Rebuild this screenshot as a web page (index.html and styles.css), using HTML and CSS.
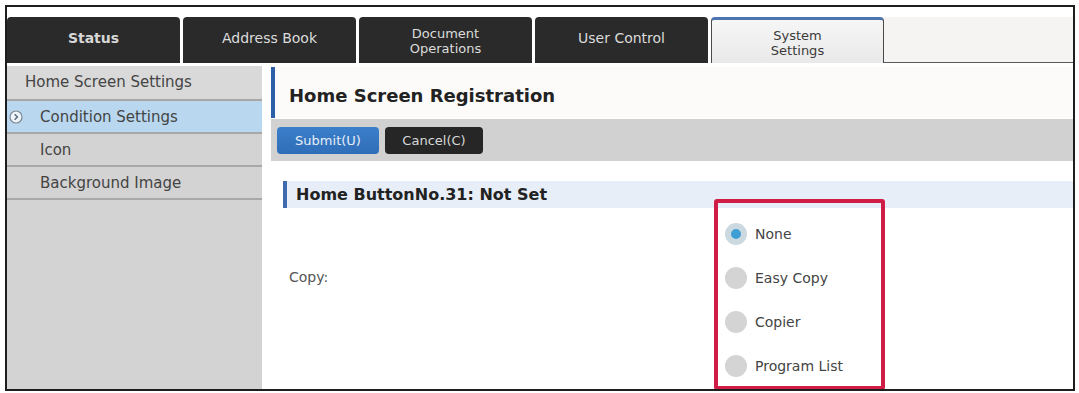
FILE: index.html
```html
<!DOCTYPE html>
<html>
<head>
  <title>Home Screen Registration</title>
  <link rel="stylesheet" href="styles.css">
</head>
<body>
  <div class="frame">
    <div class="tabs">
      <div class="tab tab-strong">Status</div>
      <div class="tab">Address Book</div>
      <div class="tab tab-two">Document<br>Operations</div>
      <div class="tab">User Control</div>
      <div class="tab tab-two tab-active">System<br>Settings</div>
      <div class="tab-fill"></div>
    </div>

    <div class="layout">
      <nav class="side">
        <div class="side-head">Home Screen Settings</div>
        <div class="side-item side-current">
          <svg class="side-arrow" width="14" height="14" viewBox="0 0 14 14">
            <circle cx="7" cy="7" r="6" fill="#eef5fb" stroke="#7d8a96" stroke-width="1.2" />
            <path d="M5.6 4.3 L8.4 7 L5.6 9.7" fill="none" stroke="#5c6b78" stroke-width="1.5" />
          </svg>
          Condition Settings
        </div>
        <div class="side-item">Icon</div>
        <div class="side-item">Background Image</div>
      </nav>

      <main class="main">
        <div class="page-head">Home Screen Registration</div>
        <div class="toolbar">
          <button class="btn btn-submit">Submit(U)</button>
          <button class="btn btn-cancel">Cancel(C)</button>
        </div>

        <div class="section-head">Home ButtonNo.31: Not Set</div>

        <div class="field">
          <div class="field-label">Copy:</div>
          <div class="options">
            <label class="option"><span class="radio radio-on"></span>None</label>
            <label class="option"><span class="radio"></span>Easy Copy</label>
            <label class="option"><span class="radio"></span>Copier</label>
            <label class="option"><span class="radio"></span>Program List</label>
          </div>
        </div>

        <div class="highlight"></div>
      </main>
    </div>
  </div>
</body>
</html>
```

FILE: styles.css
```css
body {
  margin: 0;
  background-color: white;
  font-family: "DejaVu Sans", Verdana, sans-serif;
}

.frame {
  margin: 5px;
  width: 1066px;
  height: 382px;
  border: 2px solid #1e1e1e;
  overflow: hidden;
}

/* top tabs */
.tabs {
  display: flex;
  gap: 3px;
  padding-top: 10px;
  height: 46px;
  margin-bottom: 3px;
}

.tab {
  width: 173px;
  height: 46px;
  box-sizing: border-box;
  display: flex;
  align-items: center;
  justify-content: center;
  text-align: center;
  background-color: #2a2a2a;
  color: #dcdcdc;
  font-size: 14px;
  border-radius: 4px 4px 0 0;
  padding-bottom: 4px;
}

.tab-strong {
  font-weight: bold;
  color: #d6d6d6;
}

.tab-two {
  font-size: 13px;
  line-height: 15px;
  padding-bottom: 0;
  padding-top: 2px;
}

.tab-active {
  background: linear-gradient(#f6f6f6, #e9e9e9);
  color: #3a3a3a;
  border-top: 3px solid #4b74b0;
  border-left: 1px solid #4a4a4a;
  border-right: 1px solid #4a4a4a;
}

.tab-fill {
  flex: 1;
  height: 46px;
  box-sizing: border-box;
  background-color: #f5f4f2;
  border-bottom: 1px solid #5a5a5a;
  margin-left: -3px;
}

/* page body */
.layout {
  display: flex;
  height: 323px;
}

.side {
  width: 255px;
  background-color: #d3d3d3;
  color: #444;
  font-size: 15px;
}

.side-head {
  height: 33px;
  line-height: 33px;
  padding-left: 18px;
  background-color: #d9d9d9;
  border-bottom: 2px solid #a8a8a8;
}

.side-item {
  height: 31px;
  display: flex;
  align-items: center;
  padding-left: 33px;
  border-bottom: 2px solid #a8a8a8;
}

.side-current {
  background-color: #b9d8ef;
  padding-left: 2px;
}

.side-arrow {
  margin-right: 17px;
}

.main {
  flex: 1;
  position: relative;
  background-color: white;
  color: #222;
}

.page-head {
  margin: 1px 0 0 9px;
  height: 51px;
  box-sizing: border-box;
  padding: 6px 0 0 14px;
  display: flex;
  align-items: center;
  background-color: #fcfbf9;
  border-left: 4px solid #2c5fa8;
  font-size: 18px;
  font-weight: bold;
}

.toolbar {
  margin: 1px 0 0 9px;
  height: 42px;
  display: flex;
  align-items: center;
  gap: 6px;
  padding-left: 6px;
  background-color: #d1d1d1;
}

.btn {
  height: 27px;
  border: none;
  border-radius: 4px;
  font-family: "DejaVu Sans", Verdana, sans-serif;
  font-size: 13px;
  padding: 0;
}

.btn-submit {
  width: 102px;
  background: linear-gradient(#3b7fca, #2f6db7);
  color: #e6eef8;
}

.btn-cancel {
  width: 98px;
  background-color: #262626;
  color: #d8d8d8;
}

.section-head {
  margin: 20px 0 0 21px;
  height: 27px;
  display: flex;
  align-items: center;
  padding-left: 9px;
  background-color: #e7eef8;
  border-left: 4px solid #3f6aae;
  font-size: 16px;
  font-weight: bold;
}

.field {
  display: flex;
  margin-left: 27px;
}

.field-label {
  width: 436px;
  padding-top: 60px;
  line-height: 18px;
  font-size: 14px;
  color: #555;
}

.options {
  padding-top: 4px;
}

.option {
  height: 44px;
  display: flex;
  align-items: center;
  font-size: 14px;
  color: #444;
}

.radio {
  width: 22px;
  height: 22px;
  border-radius: 50%;
  background-color: #d4d4d4;
  margin-right: 8px;
  box-sizing: border-box;
}

.radio-on {
  background-color: #3d9fd3;
  border: 6px solid #cdd9e0;
}

/* red annotation box over the options */
.highlight {
  position: absolute;
  left: 452px;
  top: 133px;
  width: 171px;
  height: 191px;
  box-sizing: border-box;
  border: 4px solid #cf1d45;
  border-radius: 3px;
}
```
